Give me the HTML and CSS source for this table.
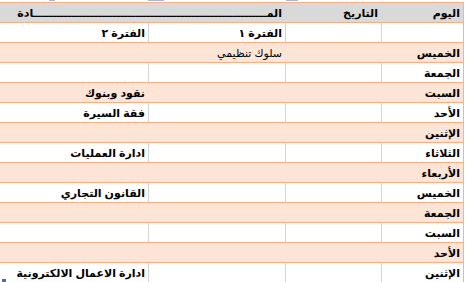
FILE: index.html
```html
<!DOCTYPE html>
<html lang="ar">
<head>
<meta charset="utf-8">
<link rel="stylesheet" href="styles.css">
</head>
<body>
<div class="sheet">
  <div class="topstrip">
    <span class="mark m1"></span><span class="mark m2"></span><span class="mark m3"></span>
  </div>
  <div class="table" dir="rtl">
    <div class="row head">
      <div class="cell b">اليوم</div>
      <div class="cell b">التاريخ</div>
      <div class="cell b span2">المــــــــــــــــــــــــــــــــــــــــــــــــــــــــــــــادة</div>
    </div>
    <div class="row white">
      <div class="cell"></div>
      <div class="cell"></div>
      <div class="cell b">الفترة ١</div>
      <div class="cell b">الفترة ٢</div>
    </div>
    <div class="row peach">
      <div class="cell b">الخميس</div>
      <div class="cell"></div>
      <div class="cell">سلوك تنظيمي</div>
      <div class="cell"></div>
    </div>
    <div class="row white">
      <div class="cell b">الجمعة</div>
      <div class="cell"></div>
      <div class="cell"></div>
      <div class="cell"></div>
    </div>
    <div class="row peach">
      <div class="cell b">السبت</div>
      <div class="cell"></div>
      <div class="cell"></div>
      <div class="cell b">نقود وبنوك</div>
    </div>
    <div class="row white">
      <div class="cell b">الأحد</div>
      <div class="cell"></div>
      <div class="cell"></div>
      <div class="cell b">فقة السيرة</div>
    </div>
    <div class="row peach">
      <div class="cell b">الإثنين</div>
      <div class="cell"></div>
      <div class="cell"></div>
      <div class="cell"></div>
    </div>
    <div class="row white">
      <div class="cell b">الثلاثاء</div>
      <div class="cell"></div>
      <div class="cell"></div>
      <div class="cell b">ادارة العمليات</div>
    </div>
    <div class="row peach">
      <div class="cell b">الأربعاء</div>
      <div class="cell"></div>
      <div class="cell"></div>
      <div class="cell"></div>
    </div>
    <div class="row white">
      <div class="cell b">الخميس</div>
      <div class="cell"></div>
      <div class="cell"></div>
      <div class="cell b">القانون التجاري</div>
    </div>
    <div class="row peach">
      <div class="cell b">الجمعة</div>
      <div class="cell"></div>
      <div class="cell"></div>
      <div class="cell"></div>
    </div>
    <div class="row white">
      <div class="cell b">السبت</div>
      <div class="cell"></div>
      <div class="cell"></div>
      <div class="cell"></div>
    </div>
    <div class="row peach">
      <div class="cell b">الأحد</div>
      <div class="cell"></div>
      <div class="cell"></div>
      <div class="cell"></div>
    </div>
    <div class="row white">
      <div class="cell b">الإثنين</div>
      <div class="cell"></div>
      <div class="cell"></div>
      <div class="cell b">ادارة الاعمال الالكترونية</div>
    </div>
  </div>
  <span class="handle"></span>
</div>
</body>
</html>
```

FILE: styles.css
```css
* { box-sizing: border-box; }
html, body {
  margin: 0;
  padding: 0;
  background: #ffffff;
}
body {
  width: 468px;
  height: 282px;
  overflow: hidden;
  font-family: "Liberation Sans", "DejaVu Sans", sans-serif;
  font-size: 11px;
  color: #000;
}
.sheet {
  position: relative;
  width: 468px;
  height: 282px;
}
.topstrip {
  position: relative;
  height: 2px;
  width: 463px;
}
.mark {
  position: absolute;
  top: 0;
  height: 1px;
  background: #a9b6cb;
}
.m1 { left: 49px; width: 6px; }
.m2 { left: 148px; width: 16px; }
.m3 { left: 286px; width: 12px; }
.table {
  width: 464px;
  border-right: 1px solid #b9c4d6;
}
.row {
  display: grid;
  grid-template-columns: 82px 96px 137px 148px;
  height: 20px;
  border-top: 1px solid #f4b084;
}
.row.head { background: #d9d9d9; }
.row.peach { background: #fce4d6; }
.row.white { background: #ffffff; }
.cell {
  display: flex;
  align-items: flex-end;
  justify-content: flex-start;
  padding: 0 3px 1px 3px;
  white-space: nowrap;
  line-height: 16px;
  overflow: visible;
}
.row.white .cell { border-left: 1px solid #d4d4d4; }
.row.white .cell:last-child { border-left: none; }
.span2 { grid-column: span 2; }
.b { font-weight: bold; }
.handle {
  position: absolute;
  left: 2px;
  top: 279px;
  width: 4px;
  height: 3px;
  background: #4a6fa8;
}
```
